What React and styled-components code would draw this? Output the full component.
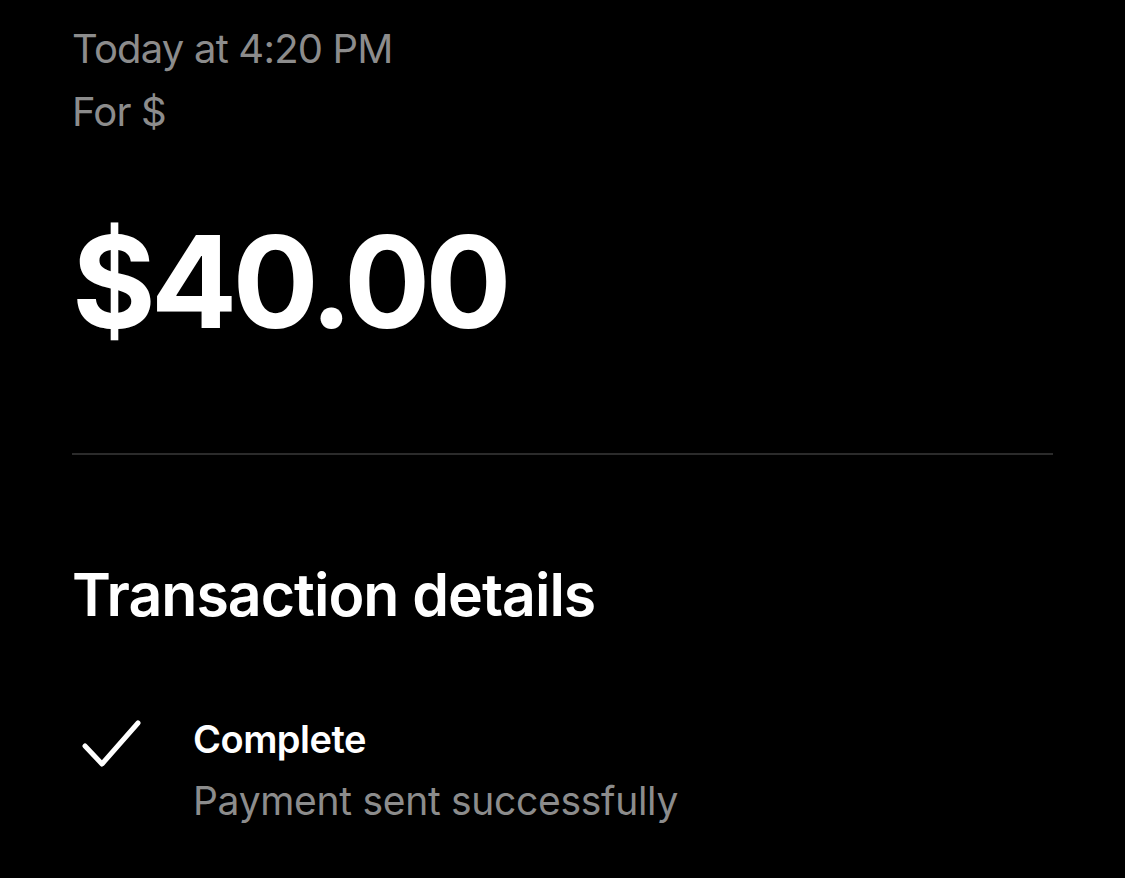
import React from 'react';
import styled, { createGlobalStyle } from 'styled-components';

const GlobalStyle = createGlobalStyle`
    html, body {
        margin: 0;
        padding: 0;
        background-color: #000000;
    }
    body {
        font-family: Inter, "Noto Sans", sans-serif;
        color: #FFFFFF;
    }
`

const Page = styled.div`
    width: 1125px;
    height: 878px;
    overflow: hidden;
    background-color: #000000;
    padding: 0 72px;
    box-sizing: border-box;
`

const Meta = styled.p`
    margin: 0;
    font-size: 40px;
    line-height: 63px;
    color: #8c8c8c;
    letter-spacing: -0.8px;
`

const TopMeta = styled(Meta)`
    padding-top: 17px;
`

const Amount = styled.h1`
    margin: 0;
    padding-top: 64px;
    font-size: 128px;
    font-weight: 700;
    line-height: 150px;
    letter-spacing: -5px;
`

const Divider = styled.hr`
    margin: 96px 0 0;
    border: none;
    height: 2px;
    background-color: #2b2b2b;
`

const SectionTitle = styled.h2`
    margin: 0;
    padding-top: 104px;
    font-size: 59px;
    font-weight: 600;
    line-height: 72px;
    letter-spacing: -1px;
`

const StatusRow = styled.div`
    display: flex;
    align-items: flex-start;
    margin-top: 77px;
`

const IconBox = styled.div`
    width: 121px;
    flex-shrink: 0;
    padding-top: 12px;
    padding-left: 10px;
    box-sizing: border-box;
`

const StatusText = styled.div`
    display: flex;
    flex-direction: column;
`

const StatusTitle = styled.span`
    font-size: 38px;
    font-weight: 600;
    line-height: 62px;
    letter-spacing: -0.5px;
`

const StatusSub = styled.span`
    font-size: 39px;
    line-height: 62px;
    color: #8c8c8c;
    letter-spacing: -0.3px;
`

const Check = () => (
    <svg width="60" height="48" viewBox="0 0 60 48" fill="none">
        <path d="M3 26 L20 44 L56 3" stroke="#FFFFFF" strokeWidth="5" strokeLinecap="round" strokeLinejoin="round" />
    </svg>
)

const App = () => {
    return (
        <Page>
            <GlobalStyle />
            <TopMeta>Today at 4:20 PM</TopMeta>
            <Meta>For $</Meta>
            <Amount>$40.00</Amount>
            <Divider />
            <SectionTitle>Transaction details</SectionTitle>
            <StatusRow>
                <IconBox>
                    <Check />
                </IconBox>
                <StatusText>
                    <StatusTitle>Complete</StatusTitle>
                    <StatusSub>Payment sent successfully</StatusSub>
                </StatusText>
            </StatusRow>
        </Page>
    )
}

export default App
